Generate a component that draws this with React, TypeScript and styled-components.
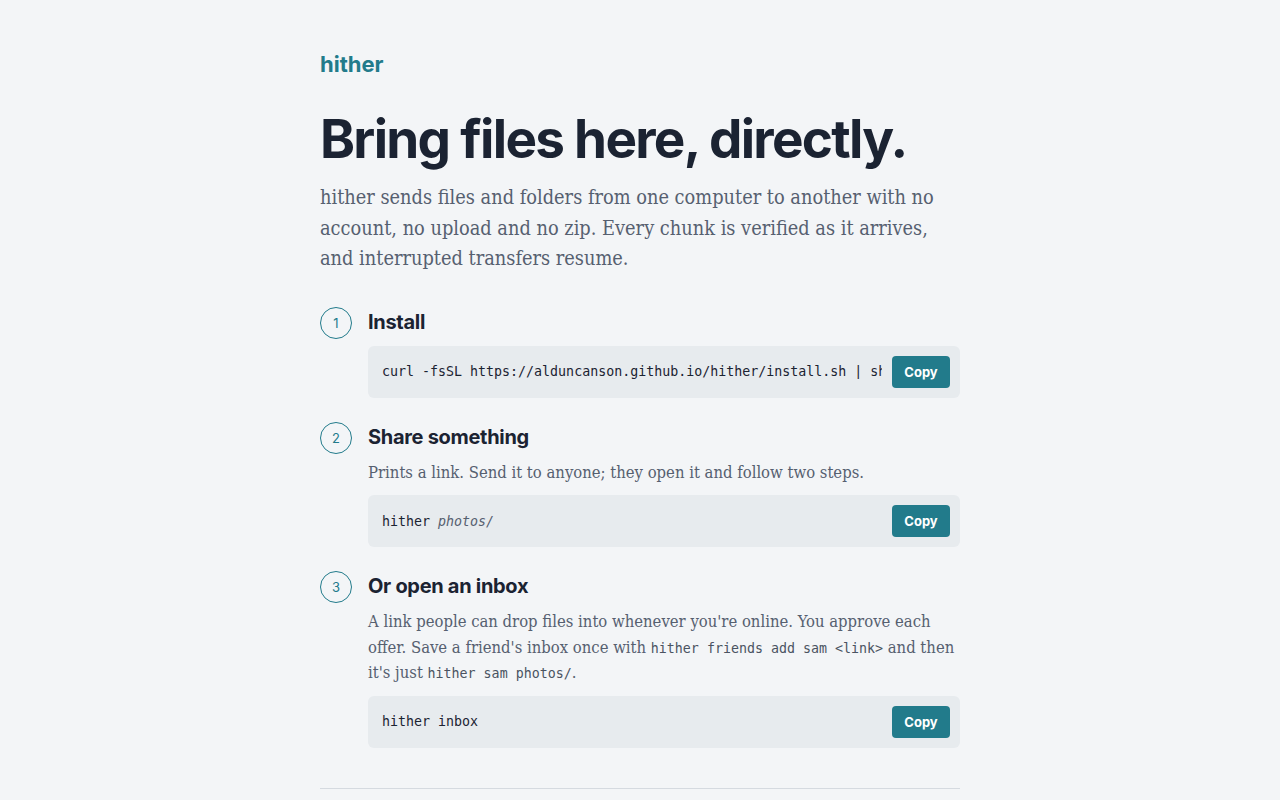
import React from "react";
import styled, { createGlobalStyle } from "styled-components";

const Global = createGlobalStyle`
  html, body { margin: 0; padding: 0; background: #f3f5f7; }
  body { font-family: "Inter", "Liberation Sans", sans-serif; color: #1b2332; }
  * { box-sizing: border-box; }
`;

const Page = styled.main`
  width: 640px;
  margin: 0 auto;
  padding-top: 50px;
`;

const Logo = styled.div`
  font-family: "Inter", sans-serif;
  font-weight: 700;
  font-size: 22px;
  line-height: 28px;
  color: #227b8b;
  letter-spacing: 0;
`;

const Title = styled.h1`
  margin: 31px 0 0;
  font-family: "Inter", sans-serif;
  font-weight: 700;
  font-size: 53px;
  line-height: 60px;
  letter-spacing: -1.7px;
  color: #1b2332;
`;

const serif = `"DejaVu Serif Condensed", "DejaVu Serif", serif`;

const Lead = styled.p`
  margin: 14px 0 0;
  font-family: ${serif};
  font-stretch: condensed;
  font-size: 19.8px;
  line-height: 30.5px;
  color: #566070;
`;

const Steps = styled.ol`
  list-style: none;
  margin: 32px 0 0;
  padding: 0;
  display: flex;
  flex-direction: column;
  gap: 24px;
`;

const Step = styled.li`
  display: grid;
  grid-template-columns: 32px 1fr;
  column-gap: 16px;
`;

const Num = styled.span`
  width: 32px;
  height: 32px;
  border-radius: 50%;
  border: 1px solid #227b8b;
  color: #227b8b;
  display: flex;
  align-items: center;
  justify-content: center;
  font-family: "Inter", sans-serif;
  font-size: 13px;
`;

const Body = styled.div`
  display: flex;
  flex-direction: column;
  min-width: 0;
`;

const StepTitle = styled.h2`
  margin: 0;
  font-family: "Inter", sans-serif;
  font-weight: 700;
  font-size: 20px;
  line-height: 30px;
  letter-spacing: -0.3px;
  color: #1b2332;
`;

const Desc = styled.p`
  margin: 8px 0 0;
  font-family: ${serif};
  font-stretch: condensed;
  font-size: 16.5px;
  line-height: 25.5px;
  color: #566070;
`;

const InlineCode = styled.code`
  font-family: "DejaVu Sans Mono", monospace;
  font-size: 13.3px;
  line-height: 1;
  color: #4a5361;
`;

const CodeBox = styled.div<{ $gap?: number }>`
  margin-top: ${(p) => p.$gap ?? 10}px;
  height: 52px;
  background: #e7ebee;
  border-radius: 6px;
  display: flex;
  align-items: center;
  padding: 0 10px 0 14px;
  gap: 10px;
`;

const Cmd = styled.code`
  flex: 1;
  min-width: 0;
  overflow: hidden;
  white-space: nowrap;
  font-family: "DejaVu Sans Mono", monospace;
  font-size: 13.3px;
  color: #1b2332;
`;

const Arg = styled.em`
  color: #566070;
`;

const CopyButton = styled.button`
  flex: none;
  width: 58px;
  height: 32px;
  border: none;
  border-radius: 4px;
  background: #227b8b;
  color: #ffffff;
  font-family: "Inter", sans-serif;
  font-weight: 700;
  font-size: 13px;
  cursor: pointer;
`;

const Rule = styled.hr`
  margin: 40px 0 0;
  border: none;
  border-top: 1px solid #d5dae0;
`;

export default function App() {
  return (
    <>
      <Global />
      <Page>
        <Logo>hither</Logo>
        <Title>Bring files here, directly.</Title>
        <Lead>
          hither sends files and folders from one computer to another with no
          account, no upload and no zip. Every chunk is verified as it arrives,
          and interrupted transfers resume.
        </Lead>
        <Steps>
          <Step>
            <Num>1</Num>
            <Body>
              <StepTitle>Install</StepTitle>
              <CodeBox $gap={9}>
                <Cmd>curl -fsSL https://alduncanson.github.io/hither/install.sh | sh</Cmd>
                <CopyButton>Copy</CopyButton>
              </CodeBox>
            </Body>
          </Step>
          <Step>
            <Num>2</Num>
            <Body>
              <StepTitle>Share something</StepTitle>
              <Desc>Prints a link. Send it to anyone; they open it and follow two steps.</Desc>
              <CodeBox>
                <Cmd>
                  hither <Arg>photos/</Arg>
                </Cmd>
                <CopyButton>Copy</CopyButton>
              </CodeBox>
            </Body>
          </Step>
          <Step>
            <Num>3</Num>
            <Body>
              <StepTitle>Or open an inbox</StepTitle>
              <Desc>
                A link people can drop files into whenever you're online. You approve each
                offer. Save a friend's inbox once with{" "}
                <InlineCode>hither friends add sam &lt;link&gt;</InlineCode> and then it's
                just <InlineCode>hither sam photos/</InlineCode>.
              </Desc>
              <CodeBox>
                <Cmd>hither inbox</Cmd>
                <CopyButton>Copy</CopyButton>
              </CodeBox>
            </Body>
          </Step>
        </Steps>
        <Rule />
      </Page>
    </>
  );
}
